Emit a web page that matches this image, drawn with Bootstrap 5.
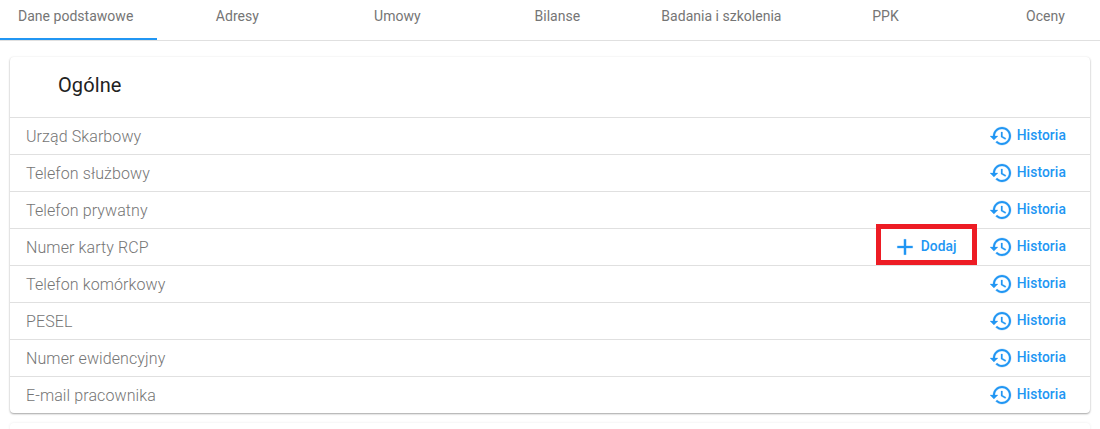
<!DOCTYPE html>
<html lang="pl">
<head>
<meta charset="utf-8">
<title>Dane podstawowe</title>
<link rel="stylesheet" href="https://cdn.jsdelivr.net/npm/bootstrap@5.3.0/dist/css/bootstrap.min.css">
<style>
html, body { height: 100%; }
body { font-family: Roboto, "Liberation Sans", sans-serif; background: #fff; overflow: hidden; color: #777; }
.tabbar { height: 41px; border-bottom: 1px solid #e0e0e0; overflow: hidden; }
.tabitem { flex: 0 0 auto; min-width: 160px; padding: 0 24px; height: 40px; line-height: 33px; text-align: center; font-size: 14px; letter-spacing: .02px; color: #757575; white-space: nowrap; }
.tabitem:first-child { margin-left: -6px; border-bottom: 2px solid #2196f3; }
.panel { margin: 16px 10px 0; border-radius: 4px; background: #fff; box-shadow: 0 1px 2px rgba(0,0,0,.35), 0 0 3px rgba(0,0,0,.05); }
.panel-head { height: 60px; padding-left: 48px; font-size: 20px; line-height: 57px; color: #212121; letter-spacing: .1px; }
.data-row { height: 37px; border-top: 1px solid #e0e0e0; padding: 0 24px 0 16px; font-size: 16px; font-weight: 300; letter-spacing: .1px; color: #757575; }
.row-label { padding-top: 2px; }
.act { font-size: 13.8px; font-weight: 500; color: #2196f3; line-height: 1; text-decoration: none; }
.act svg { fill: #2196f3; stroke: #2196f3; stroke-width: .25; display: block; flex: 0 0 auto; }
.act-text { padding-bottom: 1px; }
.act-add-wrap { position: relative; }
.act-hist { margin-left: 32px; }
.annot { position: absolute; left: -17px; top: -11px; right: -20px; bottom: -6px; border: 5px solid #ed1c24; pointer-events: none; }
.peek { margin: 10px 10px 0; height: 20px; border-radius: 4px; box-shadow: 0 0 3px rgba(0,0,0,.08); }
</style>
</head>
<body>
<div class="tabbar d-flex">
  <div class="tabitem">Dane podstawowe</div>
  <div class="tabitem">Adresy</div>
  <div class="tabitem">Umowy</div>
  <div class="tabitem">Bilanse</div>
  <div class="tabitem">Badania i szkolenia</div>
  <div class="tabitem">PPK</div>
  <div class="tabitem">Oceny</div>
</div>
<div class="panel">
  <div class="panel-head">Ogólne</div>
  <div class="data-row d-flex align-items-center"><span class="flex-grow-1 row-label">Urząd Skarbowy</span><a class="act act-hist d-flex align-items-center gap-1" href="#"><svg width="24" height="24" viewBox="0 0 24 24"><path d="M13 3c-4.97 0-9 4.03-9 9H1l3.89 3.89.07.14L9 12H6c0-3.87 3.13-7 7-7s7 3.13 7 7-3.13 7-7 7c-1.93 0-3.68-.79-4.94-2.06l-1.42 1.42C8.27 19.99 10.51 21 13 21c4.97 0 9-4.03 9-9s-4.03-9-9-9zm-1 5v5l4.28 2.54.72-1.21-3.5-2.08V8H12z"/></svg><span class="act-text">Historia</span></a></div>
  <div class="data-row d-flex align-items-center"><span class="flex-grow-1 row-label">Telefon służbowy</span><a class="act act-hist d-flex align-items-center gap-1" href="#"><svg width="24" height="24" viewBox="0 0 24 24"><path d="M13 3c-4.97 0-9 4.03-9 9H1l3.89 3.89.07.14L9 12H6c0-3.87 3.13-7 7-7s7 3.13 7 7-3.13 7-7 7c-1.93 0-3.68-.79-4.94-2.06l-1.42 1.42C8.27 19.99 10.51 21 13 21c4.97 0 9-4.03 9-9s-4.03-9-9-9zm-1 5v5l4.28 2.54.72-1.21-3.5-2.08V8H12z"/></svg><span class="act-text">Historia</span></a></div>
  <div class="data-row d-flex align-items-center"><span class="flex-grow-1 row-label">Telefon prywatny</span><a class="act act-hist d-flex align-items-center gap-1" href="#"><svg width="24" height="24" viewBox="0 0 24 24"><path d="M13 3c-4.97 0-9 4.03-9 9H1l3.89 3.89.07.14L9 12H6c0-3.87 3.13-7 7-7s7 3.13 7 7-3.13 7-7 7c-1.93 0-3.68-.79-4.94-2.06l-1.42 1.42C8.27 19.99 10.51 21 13 21c4.97 0 9-4.03 9-9s-4.03-9-9-9zm-1 5v5l4.28 2.54.72-1.21-3.5-2.08V8H12z"/></svg><span class="act-text">Historia</span></a></div>
  <div class="data-row d-flex align-items-center"><span class="flex-grow-1 row-label">Numer karty RCP</span>
    <span class="act-add-wrap"><a class="act d-flex align-items-center gap-0" href="#"><svg class="me-1" width="24" height="24" viewBox="1 1 22 22"><path d="M19 13h-6v6h-2v-6H5v-2h6V5h2v6h6v2z"/></svg><span class="act-text">Dodaj</span></a><span class="annot"></span></span>
    <a class="act act-hist d-flex align-items-center gap-1" href="#"><svg width="24" height="24" viewBox="0 0 24 24"><path d="M13 3c-4.97 0-9 4.03-9 9H1l3.89 3.89.07.14L9 12H6c0-3.87 3.13-7 7-7s7 3.13 7 7-3.13 7-7 7c-1.93 0-3.68-.79-4.94-2.06l-1.42 1.42C8.27 19.99 10.51 21 13 21c4.97 0 9-4.03 9-9s-4.03-9-9-9zm-1 5v5l4.28 2.54.72-1.21-3.5-2.08V8H12z"/></svg><span class="act-text">Historia</span></a></div>
  <div class="data-row d-flex align-items-center"><span class="flex-grow-1 row-label">Telefon komórkowy</span><a class="act act-hist d-flex align-items-center gap-1" href="#"><svg width="24" height="24" viewBox="0 0 24 24"><path d="M13 3c-4.97 0-9 4.03-9 9H1l3.89 3.89.07.14L9 12H6c0-3.87 3.13-7 7-7s7 3.13 7 7-3.13 7-7 7c-1.93 0-3.68-.79-4.94-2.06l-1.42 1.42C8.27 19.99 10.51 21 13 21c4.97 0 9-4.03 9-9s-4.03-9-9-9zm-1 5v5l4.28 2.54.72-1.21-3.5-2.08V8H12z"/></svg><span class="act-text">Historia</span></a></div>
  <div class="data-row d-flex align-items-center"><span class="flex-grow-1 row-label">PESEL</span><a class="act act-hist d-flex align-items-center gap-1" href="#"><svg width="24" height="24" viewBox="0 0 24 24"><path d="M13 3c-4.97 0-9 4.03-9 9H1l3.89 3.89.07.14L9 12H6c0-3.87 3.13-7 7-7s7 3.13 7 7-3.13 7-7 7c-1.93 0-3.68-.79-4.94-2.06l-1.42 1.42C8.27 19.99 10.51 21 13 21c4.97 0 9-4.03 9-9s-4.03-9-9-9zm-1 5v5l4.28 2.54.72-1.21-3.5-2.08V8H12z"/></svg><span class="act-text">Historia</span></a></div>
  <div class="data-row d-flex align-items-center"><span class="flex-grow-1 row-label">Numer ewidencyjny</span><a class="act act-hist d-flex align-items-center gap-1" href="#"><svg width="24" height="24" viewBox="0 0 24 24"><path d="M13 3c-4.97 0-9 4.03-9 9H1l3.89 3.89.07.14L9 12H6c0-3.87 3.13-7 7-7s7 3.13 7 7-3.13 7-7 7c-1.93 0-3.68-.79-4.94-2.06l-1.42 1.42C8.27 19.99 10.51 21 13 21c4.97 0 9-4.03 9-9s-4.03-9-9-9zm-1 5v5l4.28 2.54.72-1.21-3.5-2.08V8H12z"/></svg><span class="act-text">Historia</span></a></div>
  <div class="data-row d-flex align-items-center"><span class="flex-grow-1 row-label">E-mail pracownika</span><a class="act act-hist d-flex align-items-center gap-1" href="#"><svg width="24" height="24" viewBox="0 0 24 24"><path d="M13 3c-4.97 0-9 4.03-9 9H1l3.89 3.89.07.14L9 12H6c0-3.87 3.13-7 7-7s7 3.13 7 7-3.13 7-7 7c-1.93 0-3.68-.79-4.94-2.06l-1.42 1.42C8.27 19.99 10.51 21 13 21c4.97 0 9-4.03 9-9s-4.03-9-9-9zm-1 5v5l4.28 2.54.72-1.21-3.5-2.08V8H12z"/></svg><span class="act-text">Historia</span></a></div>
</div>
<div class="peek"></div>
<script src="https://cdn.jsdelivr.net/npm/bootstrap@5.3.0/dist/js/bootstrap.bundle.min.js"></script>
</body>
</html>
